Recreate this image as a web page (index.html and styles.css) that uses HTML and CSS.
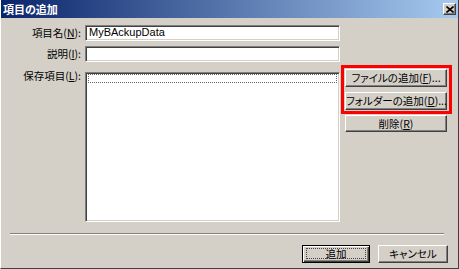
FILE: index.html
```html
<!DOCTYPE html>
<html lang="ja">
<head>
    <meta charset="UTF-8">
    <meta name="viewport" content="width=device-width, initial-scale=1.0">
    <title>項目の追加</title>
    <link rel="stylesheet" href="styles.css">
</head>
<body>
    <div class="window">
        <div class="titlebar">
            <span class="title">項目の追加</span>
            <button class="close-btn" aria-label="閉じる">
                <svg width="8" height="7" viewBox="0 0 8 7">
                    <path d="M0.5 0.5 L7.5 6.5 M7.5 0.5 L0.5 6.5" stroke="#000" stroke-width="1.6" fill="none"/>
                </svg>
            </button>
        </div>
        <div class="content">
            <div class="form">
                <label class="label">項目名(<u>N</u>):</label>
                <div class="input">MyBAckupData</div>
                <label class="label second">説明(<u>I</u>):</label>
                <div class="input second"></div>
                <label class="label list-label">保存項目(<u>L</u>):</label>
                <div class="listbox">
                    <div class="focus-row"></div>
                </div>
                <div class="side">
                    <div class="highlight">
                        <button class="btn side-btn">ファイルの追加(<u>F</u>)...</button>
                        <button class="btn side-btn">フォルダーの追加(<u>D</u>)...</button>
                    </div>
                    <button class="btn side-btn delete-btn">削除(<u>R</u>)</button>
                </div>
            </div>
            <div class="separator"></div>
            <div class="footer">
                <button class="btn default-btn"><span class="focus">追加</span></button>
                <button class="btn footer-btn">キャンセル</button>
            </div>
        </div>
    </div>
</body>
</html>
```

FILE: styles.css
```css
* {
    margin: 0;
    padding: 0;
    box-sizing: border-box;
}
body {
    background-color: #d4d0c8;
    font-family: "Noto Sans CJK JP", "Liberation Sans", sans-serif;
    font-size: 10.5px;
    font-feature-settings: "palt";
    color: #000;
}
u {
    text-decoration: underline;
    text-underline-offset: 1px;
}
.window {
    width: 459px;
    height: 269px;
    overflow: hidden;
    background-color: #d4d0c8;
    border-left: 1px solid #fff;
    border-right: 1px solid #404040;
    border-bottom: 1px solid #404040;
    display: flex;
    flex-direction: column;
}
.titlebar {
    height: 18px;
    flex-shrink: 0;
    display: flex;
    align-items: center;
    justify-content: space-between;
    padding: 0 2px 0 2px;
    background: linear-gradient(to right, #0a246a, #a6caf0);
}
.title {
    color: #fff;
    font-weight: bold;
    font-size: 11px;
    line-height: 14px;
}
.close-btn {
    width: 13px;
    height: 12px;
    display: flex;
    align-items: center;
    justify-content: center;
    background-color: #d4d0c8;
    border: 1px solid;
    border-color: #fff #404040 #404040 #fff;
    box-shadow: inset -1px -1px #808080;
}
.content {
    padding-top: 7px;
}
.form {
    display: grid;
    grid-template-columns: 84px 255px 114px;
    align-items: start;
}
.label {
    grid-column: 1;
    align-self: center;
    text-align: right;
    padding-right: 4px;
    line-height: 14px;
    white-space: nowrap;
}
.label.second {
    margin-top: 5px;
}
.input {
    grid-column: 2;
    height: 16px;
    background-color: #fff;
    border: 1px solid;
    border-color: #808080 #fff #fff #808080;
    box-shadow: inset 1px 1px #404040, inset -1px -1px #d4d0c8;
    font-family: "Liberation Sans", sans-serif;
    font-size: 11px;
    line-height: 13px;
    padding-left: 3px;
}
.input.second {
    margin-top: 5px;
}
.label.list-label {
    grid-row: 3;
    align-self: start;
    margin-top: 7px;
}
.listbox {
    grid-column: 2;
    grid-row: 3;
    height: 150px;
    margin-top: 10px;
    background-color: #fff;
    border: 1px solid;
    border-color: #808080 #fff #fff #808080;
    box-shadow: inset 1px 1px #404040, inset -1px -1px #d4d0c8;
    padding: 1px 2px 0 2px;
}
.focus-row {
    height: 9px;
    border: 1px dotted #666;
}
.side {
    grid-column: 3;
    grid-row: 3;
    margin-top: 3px;
    margin-left: 1px;
}
.highlight {
    width: 111px;
    border: 3px solid #f00;
    padding: 1px 2px 1px 1px;
    display: flex;
    flex-direction: column;
    gap: 5px;
}
.btn {
    background-color: #d4d0c8;
    border: 1px solid;
    border-color: #fff #404040 #404040 #fff;
    box-shadow: inset -1px -1px #808080;
    font-family: inherit;
    font-size: 10.5px;
    font-feature-settings: "palt";
    color: #000;
    line-height: 14px;
    text-align: center;
    white-space: nowrap;
}
.side-btn {
    width: 102px;
    height: 18px;
}
.delete-btn {
    display: block;
    height: 17px;
    margin-top: 1px;
    margin-left: 4px;
}
.separator {
    height: 2px;
    margin: 11px 14px 0 9px;
    border-top: 1px solid #808080;
    border-bottom: 1px solid #fff;
}
.footer {
    display: flex;
    justify-content: flex-end;
    gap: 8px;
    padding: 10px 10px 0 0;
}
.footer-btn {
    width: 70px;
    height: 18px;
}
.default-btn {
    width: 68px;
    height: 18px;
    border: 1px solid #000;
    box-shadow: inset 1px 1px #fff, inset -1px -1px #404040, inset -2px -2px #808080;
    padding: 2px 3px 3px 3px;
    display: flex;
}
.focus {
    flex: 1;
    border: 1px dotted #444;
    line-height: 9px;
}
```
